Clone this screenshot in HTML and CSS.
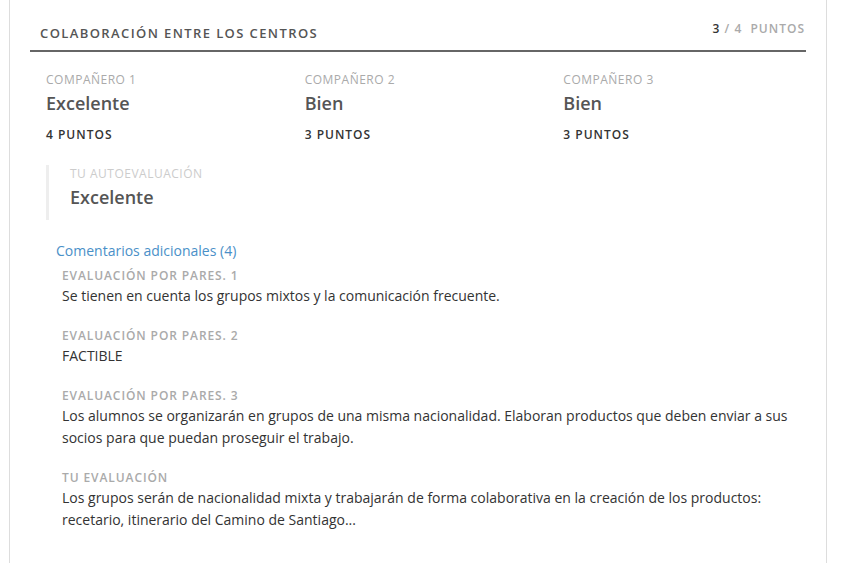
FILE: index.html
```html
<!DOCTYPE html>
<html lang="es">
<head>
    <meta charset="UTF-8">
    <meta name="viewport" content="width=device-width, initial-scale=1.0">
    <title>Colaboración entre los centros</title>
    <link rel="stylesheet" href="styles.css">
</head>
<body>
    <div class="card">
        <div class="criterion-header">
            <h3 class="criterion-title">Colaboración entre los centros</h3>
            <div class="criterion-points"><span class="earned">3</span> / 4&nbsp; puntos</div>
        </div>

        <div class="peer-grid">
            <div class="peer">
                <div class="peer-label">Compañero 1</div>
                <div class="peer-value">Excelente</div>
                <div class="peer-points">4 puntos</div>
            </div>
            <div class="peer">
                <div class="peer-label">Compañero 2</div>
                <div class="peer-value">Bien</div>
                <div class="peer-points">3 puntos</div>
            </div>
            <div class="peer">
                <div class="peer-label">Compañero 3</div>
                <div class="peer-value">Bien</div>
                <div class="peer-points">3 puntos</div>
            </div>
        </div>

        <div class="self-eval">
            <div class="self-label">Tu autoevaluación</div>
            <div class="self-value">Excelente</div>
        </div>

        <div class="comments">
            <a class="comments-toggle" href="#">Comentarios adicionales (4)</a>
            <div class="comment">
                <div class="comment-label">Evaluación por pares. 1</div>
                <p class="comment-text">Se tienen en cuenta los grupos mixtos y la comunicación frecuente.</p>
            </div>
            <div class="comment">
                <div class="comment-label">Evaluación por pares. 2</div>
                <p class="comment-text">FACTIBLE</p>
            </div>
            <div class="comment">
                <div class="comment-label">Evaluación por pares. 3</div>
                <p class="comment-text">Los alumnos se organizarán en grupos de una misma nacionalidad. Elaboran productos que deben enviar a sus socios para que puedan proseguir el trabajo.</p>
            </div>
            <div class="comment">
                <div class="comment-label">Tu evaluación</div>
                <p class="comment-text">Los grupos serán de nacionalidad mixta y trabajarán de forma colaborativa en la creación de los productos: recetario, itinerario del Camino de Santiago...</p>
            </div>
        </div>
    </div>
</body>
</html>
```

FILE: styles.css
```css
body {
    margin: 0;
    font-family: "Open Sans", "Liberation Sans", sans-serif;
    background: #fff;
    color: #333;
}
.card {
    margin-left: 9px;
    width: 776px;
    min-height: 527px;
    padding: 18px 20px 18px;
    border-left: 1px solid #ddd;
    border-right: 1px solid #ddd;
}
.criterion-header {
    display: flex;
    justify-content: space-between;
    align-items: flex-start;
    padding: 0 1px 0 10px;
    border-bottom: 2px solid #666;
}
.criterion-title {
    margin: 0;
    padding: 5px 0 7px;
    font-size: 13px;
    line-height: 20px;
    font-weight: 600;
    letter-spacing: 1.4px;
    text-transform: uppercase;
    color: #555;
}
.criterion-points {
    padding-top: 1px;
    font-size: 12px;
    line-height: 20px;
    font-weight: 600;
    letter-spacing: 1px;
    text-transform: uppercase;
    color: #aaa;
}
.criterion-points .earned {
    color: #333;
}
.peer-grid {
    display: grid;
    grid-template-columns: repeat(3, 1fr);
    padding-top: 19px;
}
.peer {
    padding: 0 16px;
}
.peer-label {
    font-size: 12px;
    line-height: 18px;
    letter-spacing: 0.5px;
    text-transform: uppercase;
    color: #aaa;
}
.peer-value {
    font-size: 18px;
    line-height: 28px;
    font-weight: 600;
    color: #555;
}
.peer-points {
    margin-top: 10px;
    font-size: 12px;
    line-height: 16px;
    font-weight: 600;
    letter-spacing: 1px;
    text-transform: uppercase;
    color: #333;
}
.self-eval {
    margin: 22px 0 0 16px;
    padding: 0 0 9px 21px;
    border-left: 3px solid #eee;
}
.self-label {
    font-size: 12px;
    line-height: 18px;
    letter-spacing: 0.5px;
    text-transform: uppercase;
    color: #ccc;
}
.self-value {
    font-size: 18px;
    line-height: 28px;
    font-weight: 600;
    color: #555;
}
.comments {
    padding: 20px 0 0 26px;
}
.comments-toggle {
    display: block;
    margin-bottom: 2px;
    font-size: 14px;
    line-height: 22px;
    color: #4a90c8;
    text-decoration: none;
}
.comment {
    padding-left: 6px;
    margin-bottom: 17px;
}
.comment-label {
    padding-top: 3px;
    font-size: 12px;
    line-height: 18px;
    font-weight: 600;
    letter-spacing: 0.9px;
    text-transform: uppercase;
    color: #aaa;
}
.comment-text {
    margin: 0;
    font-size: 14px;
    line-height: 22px;
    color: #333;
}
```
